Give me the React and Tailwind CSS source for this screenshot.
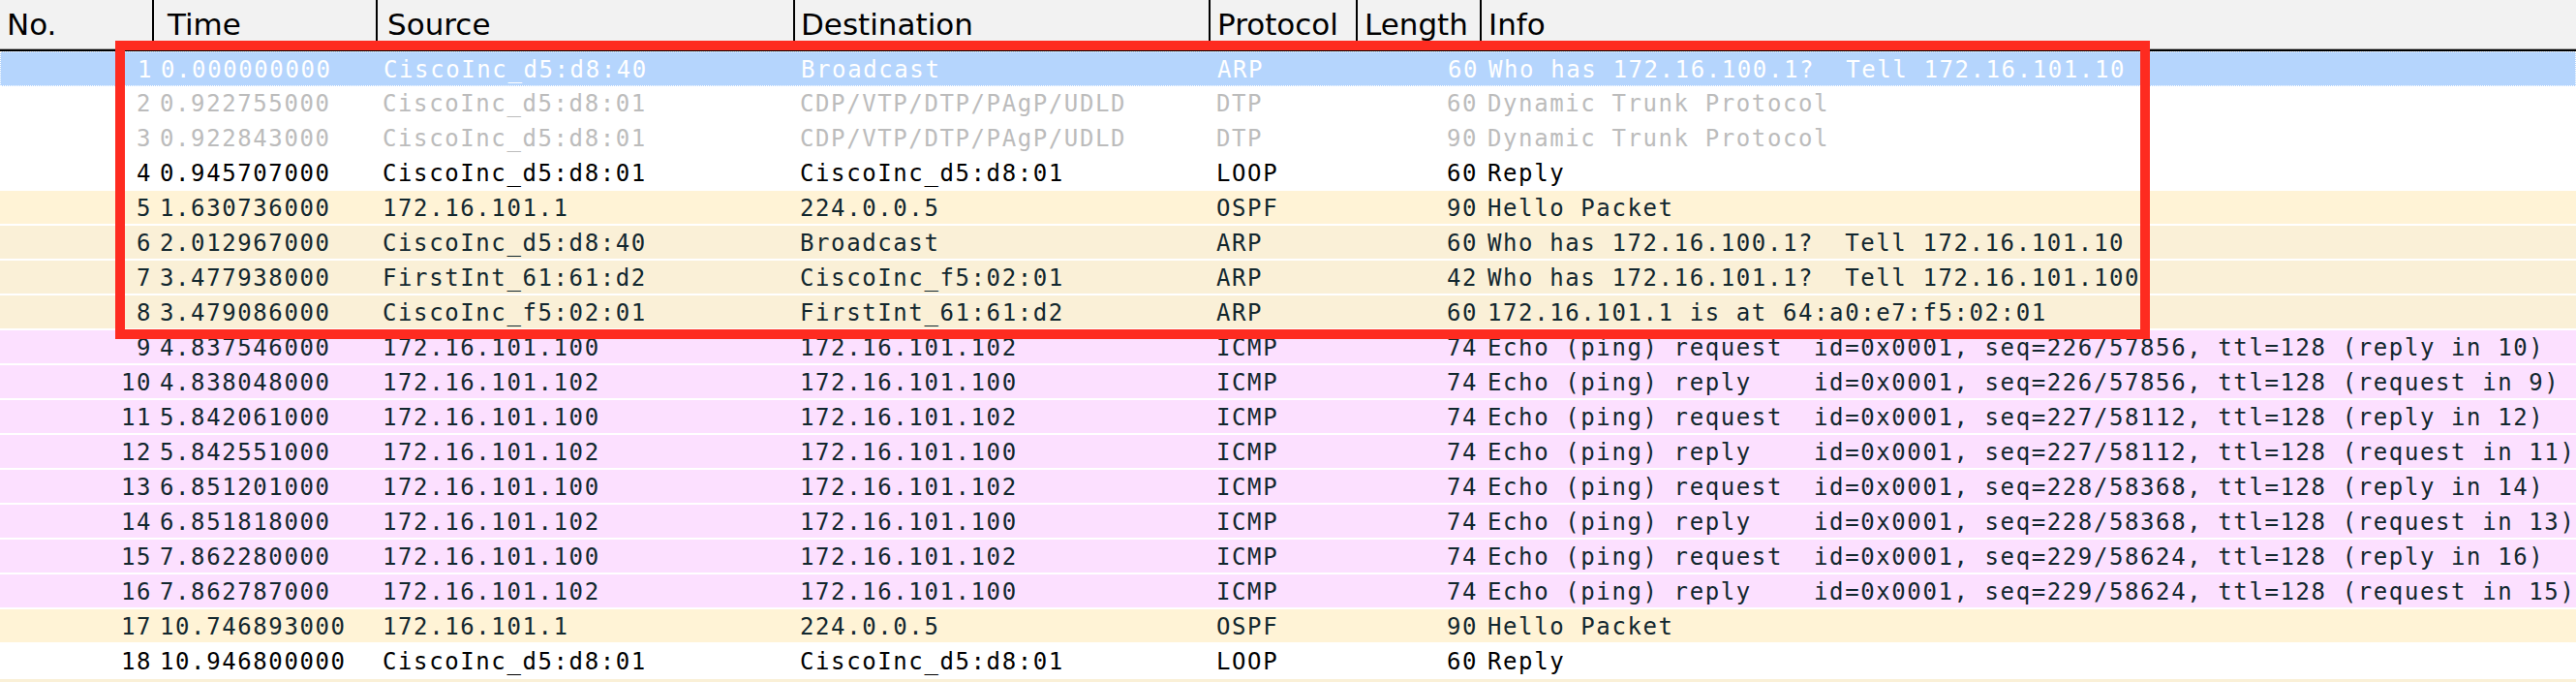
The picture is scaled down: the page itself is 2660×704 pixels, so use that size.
const HEADERS = [
  { label: "No.", cls: "w-[159px] pl-[7px] border-r-2 border-black" },
  { label: "Time", cls: "w-[231px] pl-[14px] border-r-2 border-black" },
  { label: "Source", cls: "w-[431px] pl-[10px] border-r-2 border-black" },
  { label: "Destination", cls: "w-[429px] pl-[6px] border-r-2 border-black" },
  { label: "Protocol", cls: "w-[152px] pl-[7px] border-r-2 border-black" },
  { label: "Length", cls: "w-[128px] pl-[7px] border-r-2 border-black" },
  { label: "Info", cls: "flex-1 pl-[7px]" },
];

const CELLS = [
  "w-[159px] pr-[2px] text-right",
  "w-[231px] pl-[6px]",
  "w-[431px] pl-[5px]",
  "w-[429px] pl-[5px]",
  "w-[152px] pl-[6px]",
  "w-[128px] pr-[4px] text-right",
  "flex-1 pl-[6px]",
];

// row styles, like wireshark's colouring rules
const STYLES = {
  selected: "h-[36px] bg-[#b5d5fd] text-white border border-dotted border-white",
  ignored: "h-[36px] bg-white text-[#bcbcbc] border-b-2 border-white",
  plain: "h-[36px] bg-white text-black border-b-2 border-white",
  routing: "h-[36px] bg-[#fff3d6] text-[#12272e] border-b-2 border-white",
  arp: "h-[36px] bg-[#faf0d7] text-[#12272e] border-b-2 border-white",
  icmp: "h-[36px] bg-[#fce0ff] text-[#12272e] border-b-2 border-white",
};

const ping = (no, time, src, dst, type, seq, ref) => [
  no,
  time,
  src,
  dst,
  "ICMP",
  "74",
  type === "request"
    ? `Echo (ping) request  id=0x0001, seq=${seq}, ttl=128 (reply in ${ref})`
    : `Echo (ping) reply    id=0x0001, seq=${seq}, ttl=128 (request in ${ref})`,
  "icmp",
];

const PACKETS = [
  ["1", "0.000000000", "CiscoInc_d5:d8:40", "Broadcast", "ARP", "60", "Who has 172.16.100.1?  Tell 172.16.101.10", "selected"],
  ["2", "0.922755000", "CiscoInc_d5:d8:01", "CDP/VTP/DTP/PAgP/UDLD", "DTP", "60", "Dynamic Trunk Protocol", "ignored"],
  ["3", "0.922843000", "CiscoInc_d5:d8:01", "CDP/VTP/DTP/PAgP/UDLD", "DTP", "90", "Dynamic Trunk Protocol", "ignored"],
  ["4", "0.945707000", "CiscoInc_d5:d8:01", "CiscoInc_d5:d8:01", "LOOP", "60", "Reply", "plain"],
  ["5", "1.630736000", "172.16.101.1", "224.0.0.5", "OSPF", "90", "Hello Packet", "routing"],
  ["6", "2.012967000", "CiscoInc_d5:d8:40", "Broadcast", "ARP", "60", "Who has 172.16.100.1?  Tell 172.16.101.10", "arp"],
  ["7", "3.477938000", "FirstInt_61:61:d2", "CiscoInc_f5:02:01", "ARP", "42", "Who has 172.16.101.1?  Tell 172.16.101.100", "arp"],
  ["8", "3.479086000", "CiscoInc_f5:02:01", "FirstInt_61:61:d2", "ARP", "60", "172.16.101.1 is at 64:a0:e7:f5:02:01", "arp"],
  ping("9", "4.837546000", "172.16.101.100", "172.16.101.102", "request", "226/57856", "10"),
  ping("10", "4.838048000", "172.16.101.102", "172.16.101.100", "reply", "226/57856", "9"),
  ping("11", "5.842061000", "172.16.101.100", "172.16.101.102", "request", "227/58112", "12"),
  ping("12", "5.842551000", "172.16.101.102", "172.16.101.100", "reply", "227/58112", "11"),
  ping("13", "6.851201000", "172.16.101.100", "172.16.101.102", "request", "228/58368", "14"),
  ping("14", "6.851818000", "172.16.101.102", "172.16.101.100", "reply", "228/58368", "13"),
  ping("15", "7.862280000", "172.16.101.100", "172.16.101.102", "request", "229/58624", "16"),
  ping("16", "7.862787000", "172.16.101.102", "172.16.101.100", "reply", "229/58624", "15"),
  ["17", "10.746893000", "172.16.101.1", "224.0.0.5", "OSPF", "90", "Hello Packet", "routing"],
  ["18", "10.946800000", "CiscoInc_d5:d8:01", "CiscoInc_d5:d8:01", "LOOP", "60", "Reply", "plain"],
  ["", "", "", "", "", "", "", "arp"],
];

function PacketRow({ packet }) {
  const style = packet[7];
  return (
    <div className={`flex box-border ${STYLES[style]}`}>
      {CELLS.map((cls, i) => (
        <div
          key={i}
          className={`${cls} overflow-hidden whitespace-pre pt-[2px] leading-[32px] text-[24px] tracking-[1.6px]`}
        >
          {packet[i]}
        </div>
      ))}
    </div>
  );
}

export default function App() {
  return (
    <div
      className="relative h-[704px] w-[2660px] overflow-hidden bg-white"
      style={{ fontFamily: '"DejaVu Sans Mono", monospace' }}
    >
      <div className="flex h-[53px] border-b-2 border-black bg-[#f2f2f2]">
        <div className="flex h-[51px] w-full border-b border-[#a6a6a6]">
          {HEADERS.map((h) => (
            <div
              key={h.label}
              className={`${h.cls} h-full pt-[2px] text-[31px] leading-[46px] text-black`}
              style={{ fontFamily: '"DejaVu Sans", sans-serif' }}
            >
              {h.label}
            </div>
          ))}
        </div>
      </div>

      {PACKETS.map((p, i) => (
        <PacketRow key={i} packet={p} />
      ))}

      <div className="pointer-events-none absolute left-[119px] top-[42px] h-[308px] w-[2101px] border-[10px] border-[#fe2b20]" />
    </div>
  );
}
